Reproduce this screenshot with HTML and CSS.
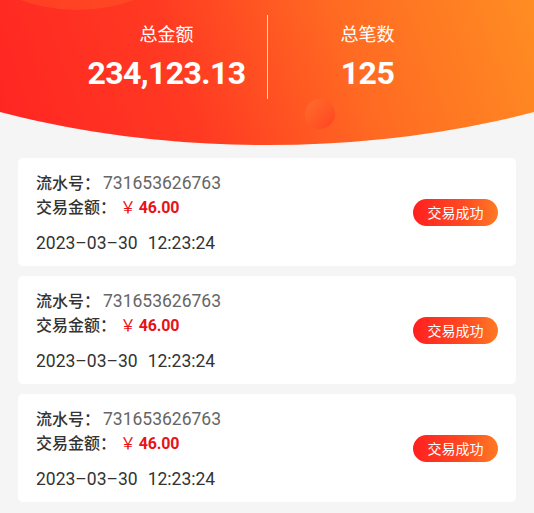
FILE: index.html
```html
<!DOCTYPE html>
<html lang="zh">
<head>
<meta charset="utf-8">
<link rel="stylesheet" href="styles.css">
</head>
<body>
<div class="page">
  <header class="hero">
    <div class="blob-big"></div>
    <div class="blob-small"></div>
    <div class="stats">
      <div class="stat">
        <div class="stat-label">总金额</div>
        <div class="stat-value">234,123.13</div>
      </div>
      <div class="divider"></div>
      <div class="stat">
        <div class="stat-label">总笔数</div>
        <div class="stat-value">125</div>
      </div>
    </div>
  </header>
  <main class="list">
    <div class="card">
      <div class="info">
        <div class="row"><span class="label">流水号：</span><span class="serial">731653626763</span></div>
        <div class="row"><span class="label">交易金额：</span><span class="amount"><span class="yen">￥</span>46.00</span></div>
        <div class="date"><span>2023–03–30</span><span class="time">12:23:24</span></div>
      </div>
      <div class="badge">交易成功</div>
    </div>
    <div class="card">
      <div class="info">
        <div class="row"><span class="label">流水号：</span><span class="serial">731653626763</span></div>
        <div class="row"><span class="label">交易金额：</span><span class="amount"><span class="yen">￥</span>46.00</span></div>
        <div class="date"><span>2023–03–30</span><span class="time">12:23:24</span></div>
      </div>
      <div class="badge">交易成功</div>
    </div>
    <div class="card">
      <div class="info">
        <div class="row"><span class="label">流水号：</span><span class="serial">731653626763</span></div>
        <div class="row"><span class="label">交易金额：</span><span class="amount"><span class="yen">￥</span>46.00</span></div>
        <div class="date"><span>2023–03–30</span><span class="time">12:23:24</span></div>
      </div>
      <div class="badge">交易成功</div>
    </div>
  </main>
</div>
</body>
</html>
```
FILE: styles.css
```css
* { box-sizing: border-box; }
html, body { margin: 0; padding: 0; }
body {
  background: #f5f5f5;
  font-family: "Noto Sans CJK SC", "Noto Sans", sans-serif;
  width: 534px;
  height: 513px;
  overflow: hidden;
}
.page { width: 534px; }
.hero {
  position: relative;
  height: 146px;
  background: linear-gradient(70deg, #ff2522 0%, #ff3a22 35%, #ff6a22 65%, #ff8d22 100%);
  clip-path: ellipse(600px 316px at 50% -171px);
  overflow: hidden;
}
.blob-big {
  position: absolute;
  left: -90px;
  top: -324px;
  width: 334px;
  height: 334px;
  border-radius: 50%;
  background: rgba(255, 110, 40, 0.3);
}
.blob-small {
  position: absolute;
  left: 305px;
  top: 99px;
  width: 30px;
  height: 30px;
  border-radius: 50%;
  background: linear-gradient(135deg, #ff6d2c 0%, #ff5a26 50%, #ff4222 100%);
}
.stats {
  position: relative;
  display: flex;
  justify-content: center;
  align-items: center;
  padding-top: 15px;
}
.stat {
  width: 200px;
  display: flex;
  flex-direction: column;
  align-items: center;
  color: #fff;
}
.stat-label {
  font-size: 18px;
  line-height: 24px;
  margin-top: -2px;
}
.stat-value {
  font-family: "Roboto", "Liberation Sans", sans-serif;
  font-weight: 700;
  font-size: 32px;
  line-height: 36px;
  margin-top: 10px;
  letter-spacing: -0.6px;
}
.divider {
  width: 1px;
  height: 84px;
  background: rgba(255, 255, 255, 0.75);
}
.list {
  padding: 12px 18px 0 18px;
  display: flex;
  flex-direction: column;
  gap: 10px;
}
.card {
  background: #fff;
  border-radius: 5px;
  height: 108px;
  padding: 12px 18px 11px 18px;
  display: flex;
  align-items: center;
  justify-content: space-between;
}
.card .info { align-self: flex-start; }
.row {
  height: 24px;
  font-size: 16px;
  line-height: 24px;
  display: flex;
  align-items: baseline;
  white-space: nowrap;
}
.label { color: #333; font-weight: 500; }
.serial {
  color: #666;
  font-family: "Roboto", "Liberation Sans", sans-serif;
  font-size: 17.5px;
  line-height: 24px;
  margin-left: 3px;
}
.amount {
  color: #e8121a;
  font-family: "Roboto", "Liberation Sans", sans-serif;
  font-weight: 700;
  font-size: 16px;
  line-height: 24px;
  margin-left: 4px;
  letter-spacing: -0.2px;
}
.yen {
  font-family: "Noto Sans CJK SC", sans-serif;
  font-weight: 400;
  margin-right: 3px;
}
.date {
  height: 24px;
  margin-top: 13px;
  font-family: "Roboto", "Liberation Sans", sans-serif;
  font-size: 17.5px;
  line-height: 24px;
  color: #333;
  white-space: nowrap;
}
.time { margin-left: 10px; }
.badge {
  width: 85px;
  height: 27px;
  border-radius: 14px;
  background: linear-gradient(90deg, #ff2020 0%, #ff4a22 60%, #ff7a24 100%);
  color: #fff;
  font-size: 14px;
  line-height: 27px;
  text-align: center;
}
```
